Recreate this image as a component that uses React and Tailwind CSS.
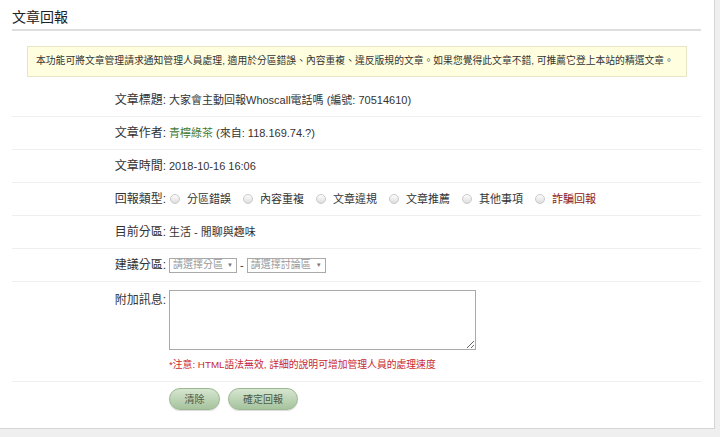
import React from 'react';

const FONT = { fontFamily: '"Liberation Sans", "Noto Sans CJK TC", sans-serif' };

const REPORT_TYPES = [
  { label: '分區錯誤' },
  { label: '內容重複' },
  { label: '文章違規' },
  { label: '文章推薦' },
  { label: '其他事項' },
  { label: '詐騙回報', danger: true },
];

function Row({ label, children }) {
  return (
    <div className="flex h-[33px] items-center border-b border-[#efefef]">
      <div className="w-[154px] text-right text-[12px] leading-[12px] text-[#333]">{label}</div>
      <div className="ml-[3px] flex items-center text-[11px] leading-[12px] text-[#333]">{children}</div>
    </div>
  );
}

function Radio({ label, danger }) {
  return (
    <label className="mr-[11px] flex items-center">
      <span className="ml-[1px] h-[10px] w-[10px] rounded-full border border-[#c9c9c9] bg-gradient-to-b from-[#fdfdfd] to-[#dedede]" />
      <span className={`ml-[7px] ${danger ? 'text-[#8c2020]' : 'text-[#333]'}`}>{label}</span>
    </label>
  );
}

function FakeSelect({ text, width }) {
  return (
    <div
      className={`flex h-[15px] items-center justify-between border border-[#aaaaaa] bg-white px-[3px] text-[10px] leading-[10px] text-[#999] ${width}`}
    >
      <span>{text}</span>
      <span className="text-[6px] text-[#777]">▼</span>
    </div>
  );
}

export default function App() {
  return (
    <div className="h-[437px] w-[720px] overflow-hidden bg-[#efefef]" style={FONT}>
      <div className="h-[429px] w-[715px] border-r border-b border-[#d4d4d4] bg-white pt-[10px]">
        <div className="mx-[12px] w-[689px] border-b-2 border-[#dedede] pb-[5px] text-[14px] leading-[14px] text-[#222]">
          文章回報
        </div>

        <div className="mt-[15px] ml-[27px] flex h-[31px] w-[660px] items-center border border-[#e6e6c4] bg-[#ffffe0] pl-[8px] text-[9.8px] text-[#333]">
          本功能可將文章管理請求通知管理人員處理, 適用於分區錯誤、內容重複、違反版規的文章。如果您覺得此文章不錯, 可推薦它登上本站的精選文章。
        </div>

        <div className="mt-[7px] ml-[12px] w-[689px]">
          <Row label="文章標題:">大家會主動回報Whoscall電話嗎 (編號: 70514610)</Row>
          <Row label="文章作者:">
            <span className="text-[#3f7a34]">青檸綠茶</span>
            <span>&nbsp;(來自: 118.169.74.?)</span>
          </Row>
          <Row label="文章時間:">2018-10-16 16:06</Row>
          <Row label="回報類型:">
            {REPORT_TYPES.map((t) => (
              <Radio key={t.label} label={t.label} danger={t.danger} />
            ))}
          </Row>
          <Row label="目前分區:">生活 - 閒聊與趣味</Row>
          <Row label="建議分區:">
            <FakeSelect text="請選擇分區" width="w-[68px]" />
            <span className="mx-[3px]">-</span>
            <FakeSelect text="請選擇討論區" width="w-[79px]" />
          </Row>

          <div className="flex border-b border-[#efefef] pt-[8px] pb-[10px]">
            <div className="mt-[4px] w-[154px] text-right text-[12px] leading-[12px] text-[#333]">附加訊息:</div>
            <div className="ml-[3px]">
              <textarea className="block h-[60px] w-[307px] border border-[#a9a9a9] bg-white" />
              <div className="mt-[9px] text-[9.8px] leading-[12px] text-[#c8282e]">
                *注意: HTML語法無效, 詳細的說明可增加管理人員的處理速度
              </div>
            </div>
          </div>

          <div className="flex pt-[6px]">
            <div className="ml-[157px] flex gap-[8px]">
              <button className="h-[22px] w-[51px] rounded-full border border-[#9cb893] bg-gradient-to-b from-[#d6e6cf] to-[#a6c39d] text-[10px] text-[#4d5a48] shadow-[0_1px_1px_rgba(0,0,0,0.15)]">
                清除
              </button>
              <button className="h-[22px] w-[70px] rounded-full border border-[#9cb893] bg-gradient-to-b from-[#d6e6cf] to-[#a6c39d] text-[10px] text-[#4d5a48] shadow-[0_1px_1px_rgba(0,0,0,0.15)]">
                確定回報
              </button>
            </div>
          </div>
        </div>
      </div>
    </div>
  );
}
